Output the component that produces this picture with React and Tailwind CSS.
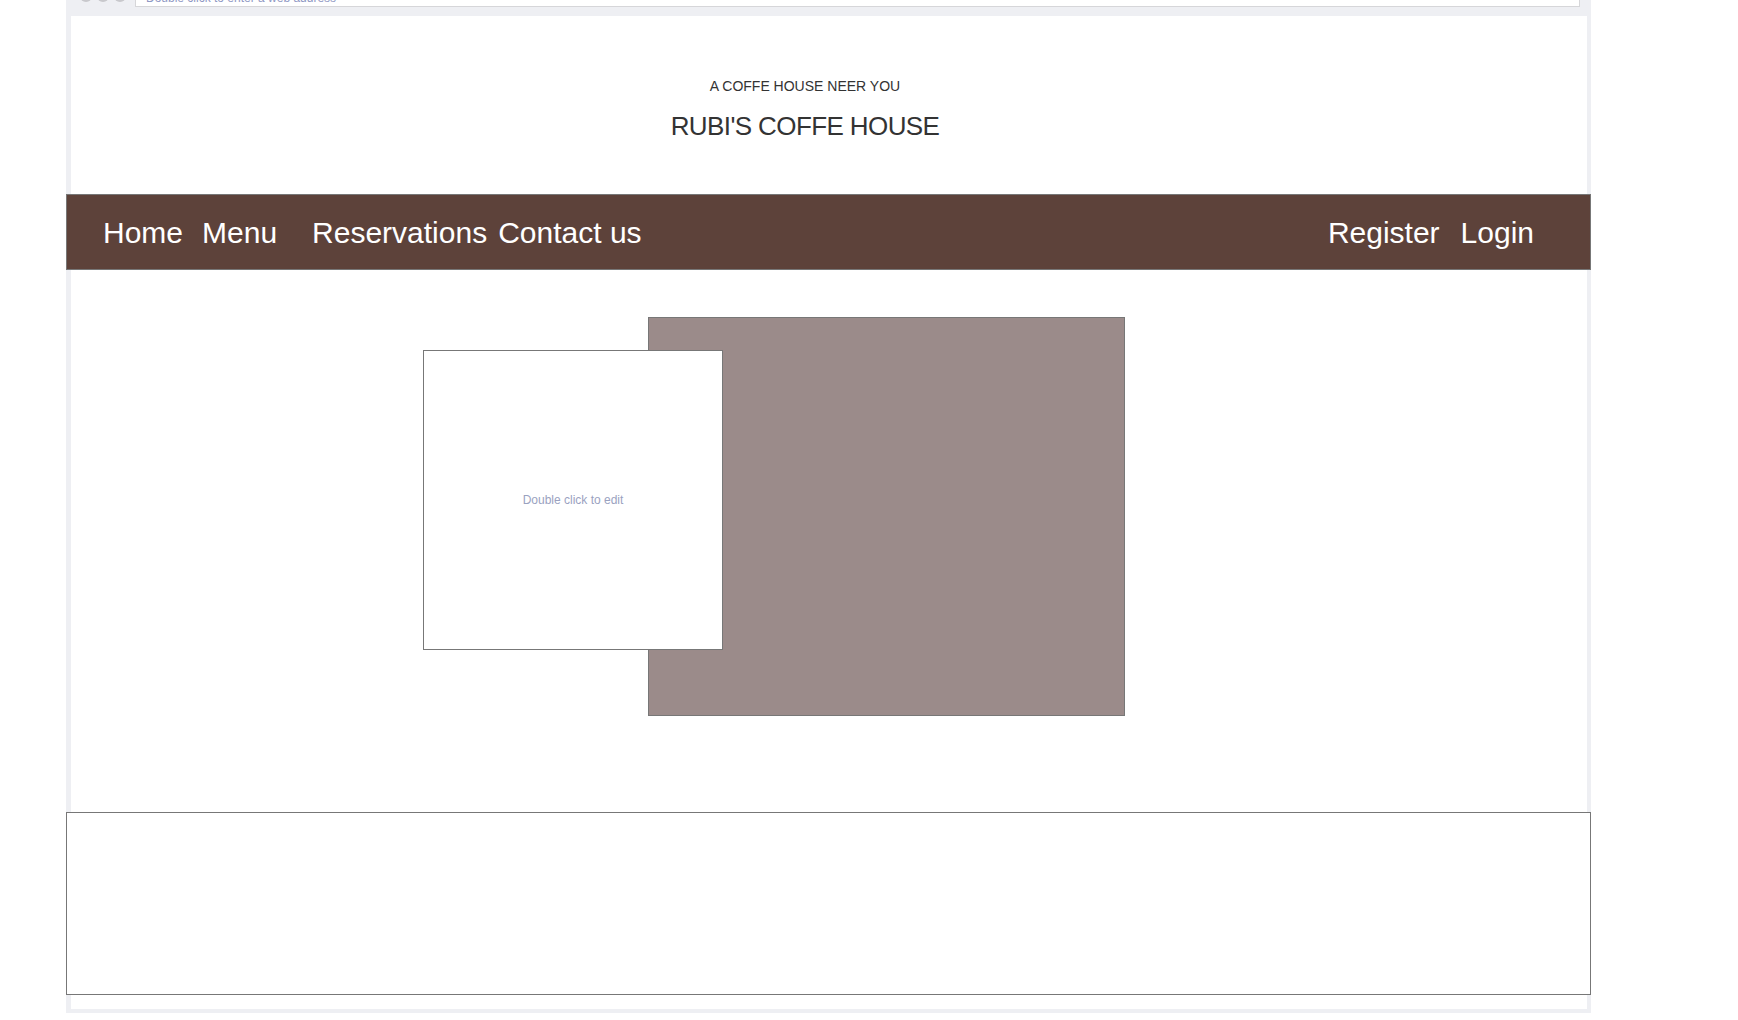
import React from 'react';

const navLeft = [
  { label: 'Home', gap: 'ml-0' },
  { label: 'Menu', gap: 'ml-[19px]' },
  { label: 'Reservations', gap: 'ml-[35px]' },
  { label: 'Contact us', gap: 'ml-[11px]' },
];

const App = () => {
  return (
    <div className="w-full h-[1020px] bg-white overflow-hidden" style={{ fontFamily: '"Liberation Sans", Arial, sans-serif' }}>
      <div className="ml-[66px] w-[1525px] bg-[#eeeff3] pb-[4px]">
        {/* browser chrome, mostly scrolled off */}
        <div className="h-[16px] overflow-hidden flex items-end">
          <div className="flex gap-[5px] ml-[14px] mb-[14px]">
            <div className="w-[12px] h-[12px] rounded-full bg-[#c8c8cc]"></div>
            <div className="w-[12px] h-[12px] rounded-full bg-[#c8c8cc]"></div>
            <div className="w-[12px] h-[12px] rounded-full bg-[#c8c8cc]"></div>
          </div>
          <div className="ml-[9px] mr-[11px] flex-1 h-[26px] mb-[9px] bg-white border border-[#d6d6d9] flex items-start pt-[9px] pl-[10px]">
            <span className="text-[12px] leading-[14px] text-[#8f98c4]">Double click to enter a web address</span>
          </div>
        </div>

        {/* header */}
        <div className="ml-[5px] mr-[4px] bg-white pt-[62px] pb-[52px] pr-[48px] flex flex-col items-center">
          <p className="text-[14px] leading-[16px] text-[#333]">A COFFE HOUSE NEER YOU</p>
          <h1 className="mt-[16px] text-[26px] leading-[32px] tracking-[-0.6px] text-[#333]">RUBI'S COFFE HOUSE</h1>
        </div>

        {/* nav */}
        <nav className="h-[76px] bg-[#5d423a] border border-[#777] flex items-center pl-[36px] pr-[56px] text-white text-[30px]">
          {navLeft.map((item) => (
            <a key={item.label} className={item.gap}>{item.label}</a>
          ))}
          <div className="ml-auto flex gap-[21px]">
            <a>Register</a>
            <a>Login</a>
          </div>
        </nav>

        {/* main */}
        <div className="ml-[5px] mr-[4px] bg-white pt-[47px] pb-[96px]">
          <div className="relative ml-[577px] w-[477px] h-[399px] bg-[#9b8b8a] border border-[#777]">
            <div className="absolute left-[-226px] top-[32px] w-[300px] h-[300px] bg-white border border-[#777] flex items-center justify-center">
              <span className="text-[12px] text-[#9aa2bf] mt-[-1px]">Double click to edit</span>
            </div>
          </div>
        </div>

        {/* footer */}
        <div className="h-[183px] bg-white border border-[#777]"></div>
        <div className="ml-[5px] mr-[4px] h-[14px] bg-white"></div>
      </div>
    </div>
  );
};

export default App;
